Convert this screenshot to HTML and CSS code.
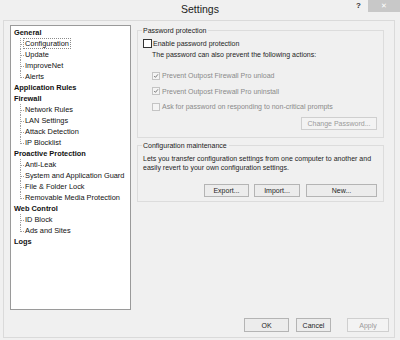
FILE: index.html
```html
<!DOCTYPE html>
<html lang="en">
<head>
    <meta charset="UTF-8">
    <title>Settings</title>
    <link rel="stylesheet" href="styles.css">
</head>
<body>
    <div class="window">
        <div class="titlebar">
            <span></span>
            <span class="title">Settings</span>
            <span class="caption">
                <span class="help">?</span>
                <span class="close">&#x2715;</span>
            </span>
        </div>

        <div class="frame">
            <div class="main">
                <ul class="tree">
                    <li class="node">General
                        <ul>
                            <li class="leaf"><span class="focus">Configuration</span></li>
                            <li class="leaf">Update</li>
                            <li class="leaf">ImproveNet</li>
                            <li class="leaf">Alerts</li>
                        </ul>
                    </li>
                    <li class="node">Application Rules</li>
                    <li class="node">Firewall
                        <ul>
                            <li class="leaf">Network Rules</li>
                            <li class="leaf">LAN Settings</li>
                            <li class="leaf">Attack Detection</li>
                            <li class="leaf">IP Blocklist</li>
                        </ul>
                    </li>
                    <li class="node">Proactive Protection
                        <ul>
                            <li class="leaf">Anti-Leak</li>
                            <li class="leaf">System and Application Guard</li>
                            <li class="leaf">File &amp; Folder Lock</li>
                            <li class="leaf">Removable Media Protection</li>
                        </ul>
                    </li>
                    <li class="node">Web Control
                        <ul>
                            <li class="leaf">ID Block</li>
                            <li class="leaf">Ads and Sites</li>
                        </ul>
                    </li>
                    <li class="node">Logs</li>
                </ul>

                <div class="pane">
                    <fieldset class="group group-password">
                        <legend>Password protection</legend>
                        <label class="check check-main">
                            <span class="box"></span>
                            Enable password protection
                        </label>
                        <div class="note">The password can also prevent the following actions:</div>

                        <label class="check disabled first">
                            <span class="box"><svg viewBox="0 0 8 8" width="8" height="8"><path d="M1.5 4 L3.3 5.8 L6.6 1.8" fill="none" stroke="#6d6d6d" stroke-width="1.2"/></svg></span>
                            Prevent Outpost Firewall Pro unload
                        </label>
                        <label class="check disabled">
                            <span class="box"><svg viewBox="0 0 8 8" width="8" height="8"><path d="M1.5 4 L3.3 5.8 L6.6 1.8" fill="none" stroke="#6d6d6d" stroke-width="1.2"/></svg></span>
                            Prevent Outpost Firewall Pro uninstall
                        </label>
                        <label class="check disabled">
                            <span class="box"></span>
                            Ask for password on responding to non-critical prompts
                        </label>

                        <div class="actions">
                            <button class="btn btn-change" disabled>Change Password...</button>
                        </div>
                    </fieldset>

                    <fieldset class="group group-config">
                        <legend>Configuration maintenance</legend>
                        <p class="desc">Lets you transfer configuration settings from one computer to another and easily revert to your own configuration settings.</p>
                        <div class="actions actions-config">
                            <button class="btn btn-export">Export...</button>
                            <button class="btn btn-import">Import...</button>
                            <button class="btn btn-new">New...</button>
                        </div>
                    </fieldset>
                </div>
            </div>

            <div class="footer">
                <button class="btn btn-ok">OK</button>
                <button class="btn btn-cancel">Cancel</button>
                <button class="btn btn-apply" disabled>Apply</button>
            </div>
        </div>
    </div>
</body>
</html>
```

FILE: styles.css
```css
body {
    margin: 0;
    padding: 0;
    background-color: #f0f0f0;
    font-family: "Liberation Sans", Arial, sans-serif;
    color: #1e1e1e;
}
.window {
    width: 400px;
    height: 340px;
    background-color: #f0f0f0;
    overflow: hidden;
}
.titlebar {
    height: 20px;
    display: grid;
    grid-template-columns: 1fr auto 1fr;
    align-items: start;
}
.title {
    font-size: 10.5px;
    line-height: 19px;
    color: #222;
}
.caption {
    display: flex;
    justify-content: flex-end;
    align-items: flex-start;
}
.help {
    font-size: 8px;
    font-weight: bold;
    line-height: 12px;
    margin-right: 7px;
    color: #333;
}
.close {
    width: 32px;
    height: 12px;
    background-color: #c8c8c8;
    color: #fff;
    font-size: 7px;
    line-height: 12px;
    text-align: center;
}
.frame {
    box-sizing: border-box;
    height: 318px;
    margin: 0 5px 2px 3px;
    border: 1px solid #dadada;
}
.main {
    display: flex;
    padding: 4px 10px 0 6px;
}

/* tree */
.tree, .tree ul {
    list-style: none;
    margin: 0;
    padding: 0;
}
.tree {
    box-sizing: border-box;
    width: 121px;
    height: 285px;
    background: #fff;
    border: 1px solid #9a9a9a;
    padding: 1px 0 0 3px;
    font-size: 7.4px;
    line-height: 11px;
    color: #111;
}
.node {
    font-weight: bold;
}
.tree ul {
    margin-left: 6px;
}
.leaf {
    position: relative;
    font-weight: normal;
    padding-left: 5px;
}
.leaf::before {
    content: "";
    position: absolute;
    left: 0;
    top: 0;
    width: 3px;
    height: 6px;
    border-left: 1px dotted #a0a0a0;
    border-bottom: 1px dotted #a0a0a0;
}
.leaf::after {
    content: "";
    position: absolute;
    left: 0;
    top: 6px;
    bottom: 0;
    border-left: 1px dotted #a0a0a0;
}
.leaf:last-child::after {
    display: none;
}
.focus {
    outline: 1px dotted #8a8a8a;
    outline-offset: 0;
    padding: 0 1px;
    margin-left: -1px;
}

/* right pane */
.pane {
    width: 247px;
    margin-left: 6px;
    padding-top: 1px;
    font-size: 7px;
}
.group {
    margin: 0;
    min-width: 0;
    border: 1px solid #dcdcdc;
    padding: 0 6px 0 4px;
}
.group legend {
    padding: 0 2px 0 1px;
    line-height: 9px;
    color: #222;
}
.group-password {
    padding-bottom: 7px;
}
.group-config {
    margin-top: 3px;
    padding-bottom: 4px;
}
.check {
    display: flex;
    align-items: center;
    height: 11px;
    line-height: 11px;
}
.check .box {
    box-sizing: border-box;
    width: 9px;
    height: 9px;
    border: 1px solid #333;
    background: #fff;
    margin-right: 1px;
    display: flex;
    align-items: center;
    justify-content: center;
}
.check-main {
    margin-top: 3px;
    margin-left: 1px;
}
.note {
    line-height: 11px;
    margin-left: 10px;
}
.check.disabled {
    color: #8a8a8a;
    margin-left: 10px;
    margin-top: 4.5px;
}
.check.disabled.first {
    margin-top: 10px;
}
.check.disabled .box {
    width: 8px;
    height: 8px;
    border-color: #c4c4c4;
    background: #f4f4f4;
    margin-right: 2px;
}
.actions {
    display: flex;
    justify-content: flex-end;
    margin-top: 5px;
}
.desc {
    margin: 5px 0 0 1px;
    line-height: 8.5px;
}
.actions-config {
    margin-top: 12px;
    gap: 5px;
}
.btn {
    box-sizing: border-box;
    height: 13px;
    padding: 0;
    font-family: inherit;
    font-size: 7px;
    color: #1e1e1e;
    background: #ececec;
    border: 1px solid #b4b4b4;
    border-radius: 0;
}
.btn:disabled {
    color: #9a9a9a;
    border-color: #cfcfcf;
    background: #f3f3f3;
}
.btn-change {
    width: 76px;
}
.btn-export {
    width: 45px;
}
.btn-import {
    width: 46px;
    margin-right: 1px;
}
.btn-new {
    width: 71px;
}

/* footer */
.footer {
    display: flex;
    justify-content: flex-end;
    margin-top: 8px;
    padding-right: 5px;
}
.footer .btn {
    height: 14px;
}
.btn-ok {
    width: 45px;
}
.btn-cancel {
    width: 35px;
    margin-left: 7px;
}
.btn-apply {
    width: 42px;
    margin-left: 16px;
}
```
